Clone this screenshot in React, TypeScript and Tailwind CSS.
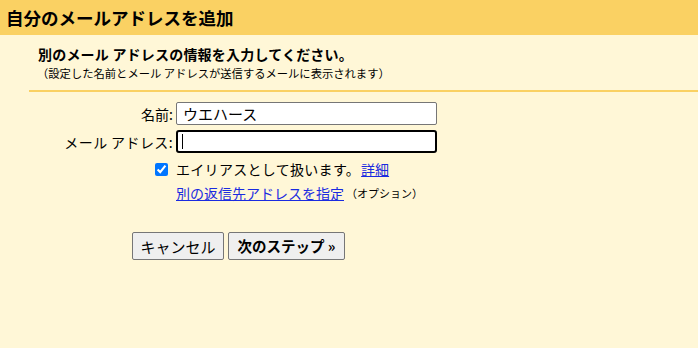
import React from "react";

export default function App() {
  return (
    <div
      className="w-full h-[348px] bg-[#fff7d7] text-black overflow-hidden"
      style={{ fontFamily: '"Noto Sans CJK JP", "Noto Sans", sans-serif' }}
    >
      <div className="h-[35px] bg-[#fad163] pl-[6px] flex items-center text-[17.5px] font-bold leading-none">
        自分のメールアドレスを追加
      </div>
      <div className="pl-[38px] pt-[10px]">
        <div className="text-[14px] font-bold leading-[18px] tracking-[0.2px]">
          別のメール アドレスの情報を入力してください。
        </div>
        <div className="text-[11.3px] leading-[14px] mt-[3px] -ml-[1px]">
          （設定した名前とメール アドレスが送信するメールに表示されます）
        </div>
      </div>
      <div className="ml-[29px] mt-[10px] h-[2px] bg-[#fad163]" />
      <div className="mt-[10px] grid grid-cols-[173px_261px] gap-x-[3px] text-[14px]">
        <label className="flex items-center justify-end h-[23px] leading-none">名前:</label>
        <input
          defaultValue="ウエハース"
          className="h-[23px] w-[261px] border border-[#767676] rounded-[2px] bg-white px-[6px] text-[15px] leading-none outline-none"
        />
        <label className="mt-[5px] flex items-center justify-end h-[23px] leading-none tracking-[0.4px]">
          メール アドレス:
        </label>
        <div className="mt-[5px] h-[23px] w-[261px] border-2 border-black rounded-[3px] bg-white flex items-center pl-[4px]">
          <div className="w-[1px] h-[15px] bg-black" />
        </div>
        <div className="mt-[7px] flex items-center justify-end h-[18px] pr-[5px]">
          <input type="checkbox" defaultChecked className="w-[13px] h-[13px] m-0 accent-[#0075ff]" />
        </div>
        <div className="mt-[7px] h-[18px] flex items-center leading-none whitespace-nowrap">
          <span className="tracking-[0.3px]">エイリアスとして扱います。</span>
          <a href="#" className="text-[#1a2be0] underline ml-[1px]">詳細</a>
        </div>
        <div />
        <div className="mt-[6px] h-[18px] flex items-center leading-none whitespace-nowrap">
          <a href="#" className="text-[#1a2be0] underline">別の返信先アドレスを指定</a>
          <span className="text-[11px] ml-[2px]">（オプション）</span>
        </div>
      </div>
      <div className="mt-[30px] ml-[132px] flex gap-[4px]">
        <button className="h-[28px] w-[92px] bg-[#efefef] border border-[#767676] rounded-[2px] text-[15px] leading-none">
          キャンセル
        </button>
        <button className="h-[28px] w-[117px] bg-[#efefef] border border-[#767676] rounded-[2px] text-[14.5px] font-bold leading-none">
          次のステップ »
        </button>
      </div>
    </div>
  );
}
